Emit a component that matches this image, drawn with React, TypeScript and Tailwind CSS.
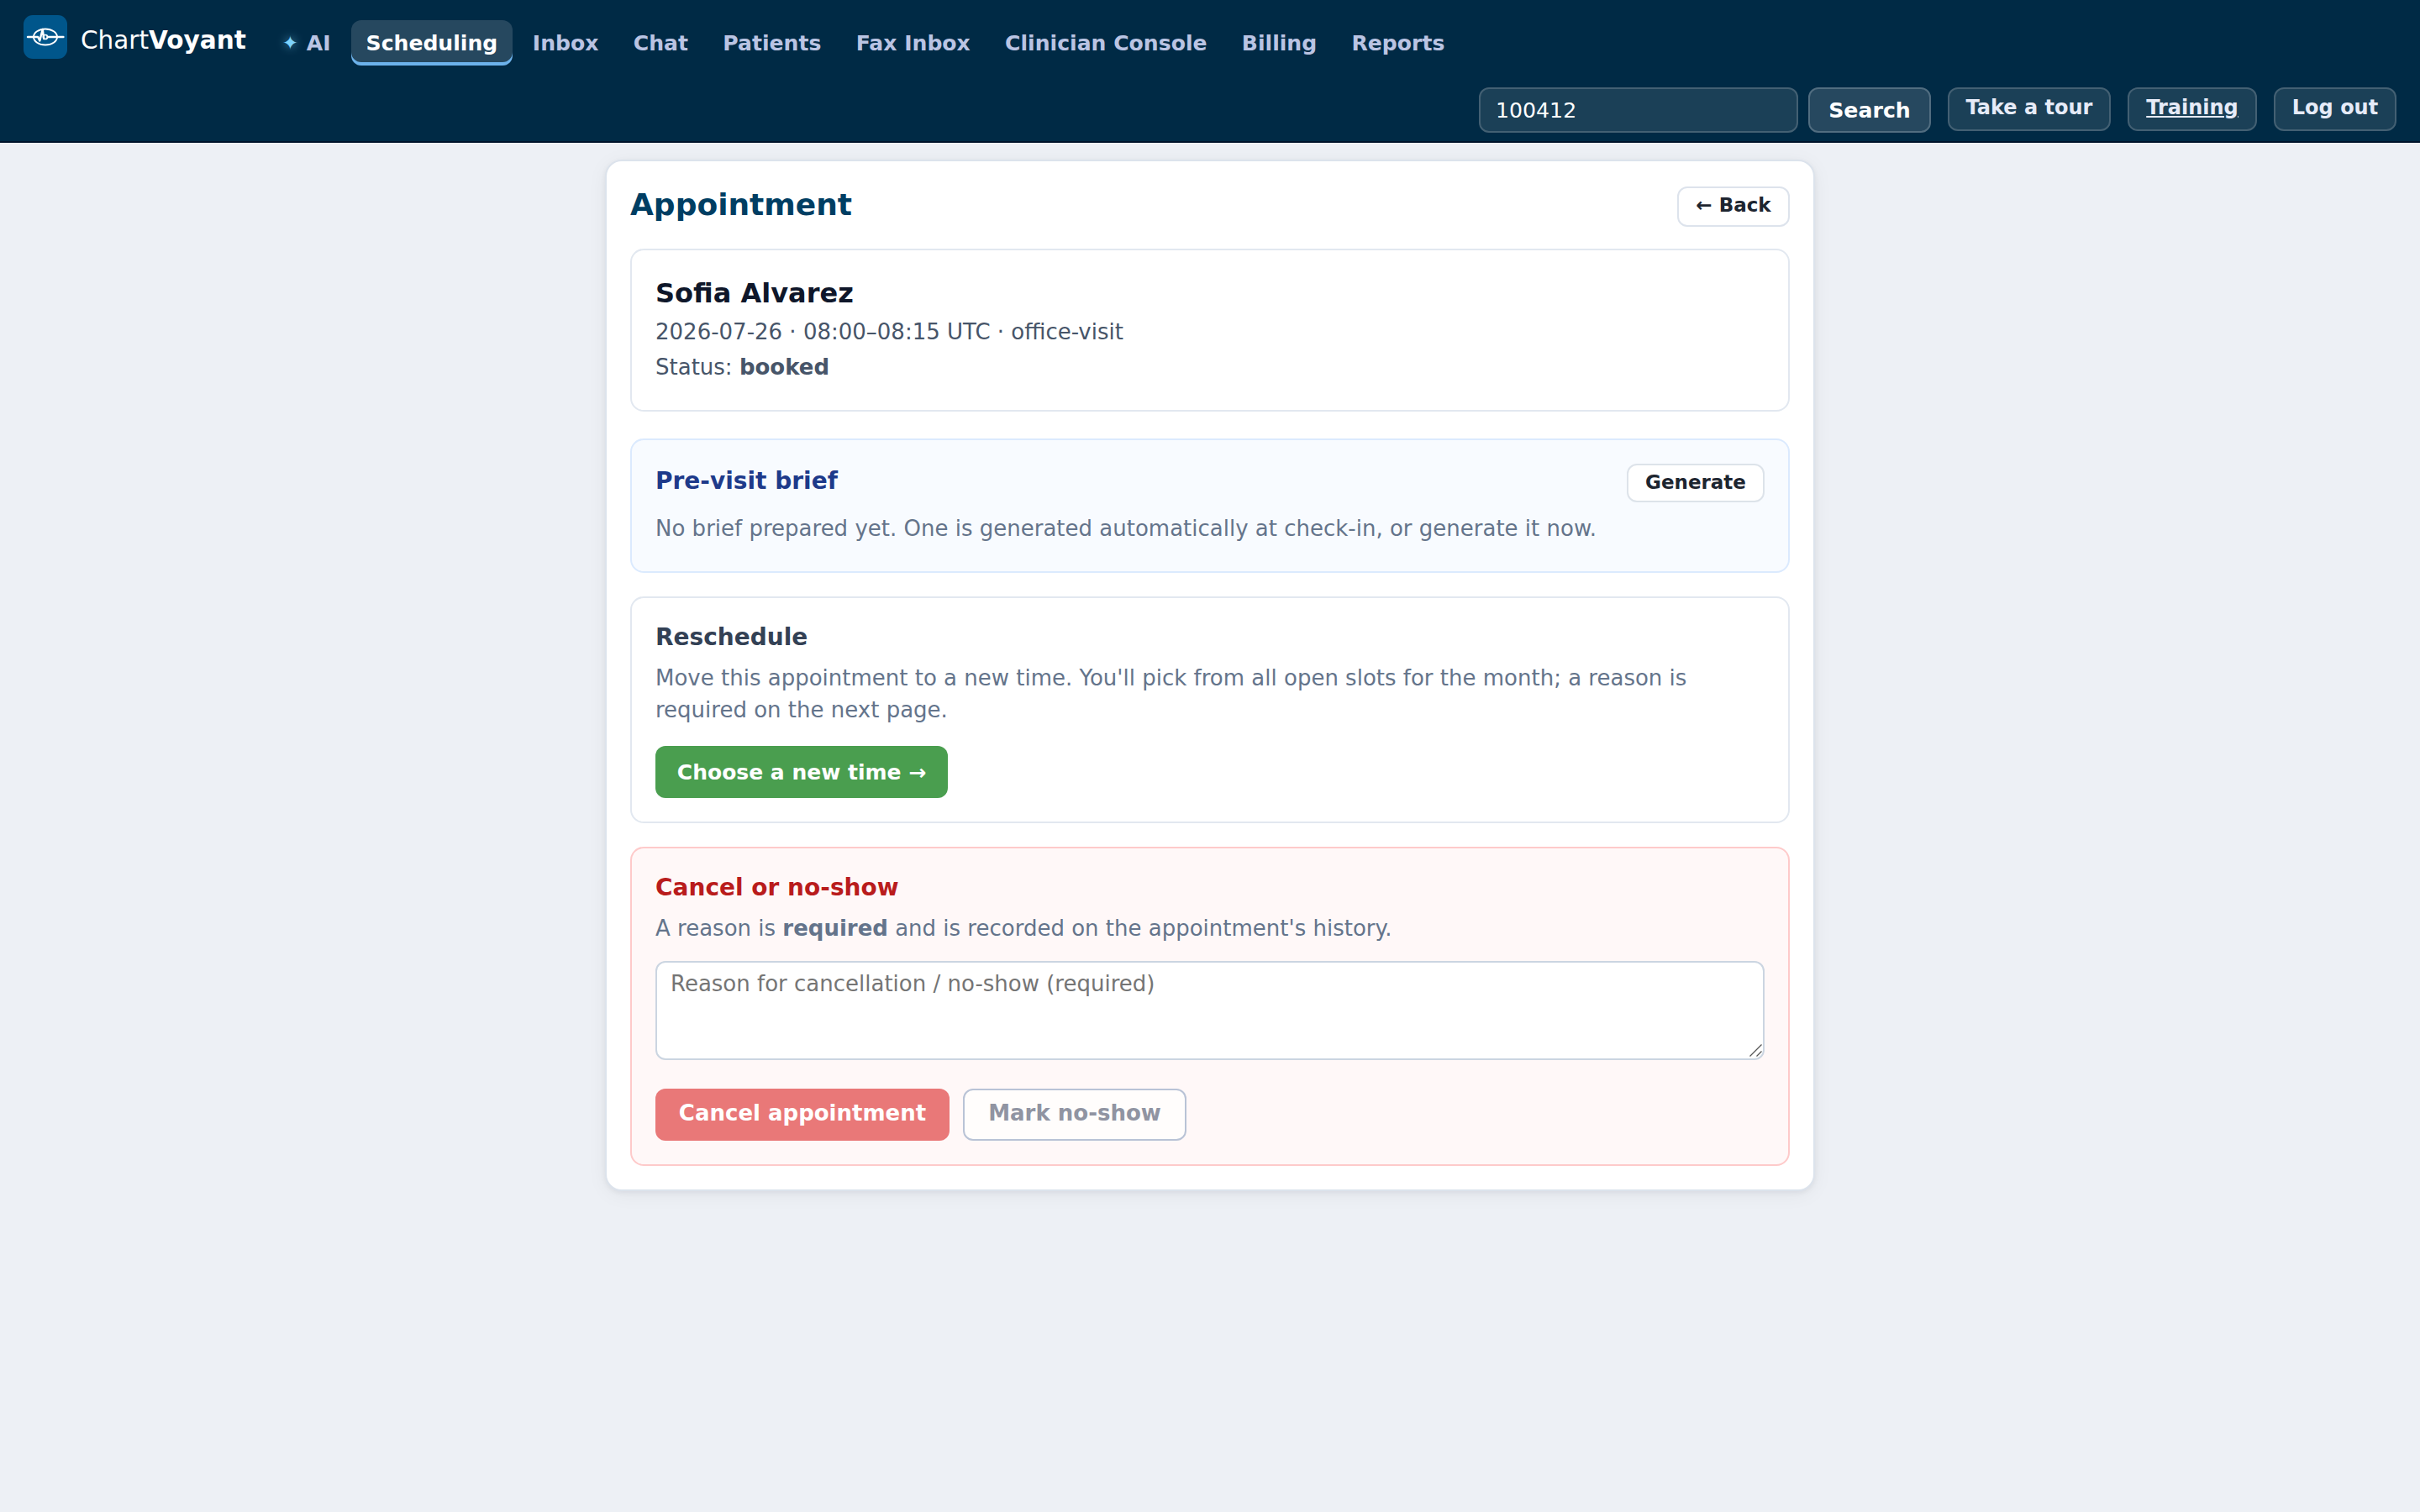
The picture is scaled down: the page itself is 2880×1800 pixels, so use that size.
import React from "react";

const navItems = [
  "Scheduling",
  "Inbox",
  "Chat",
  "Patients",
  "Fax Inbox",
  "Clinician Console",
  "Billing",
  "Reports",
];

function Logo() {
  return (
    <svg viewBox="0 0 52 52" className="size-[52px] shrink-0" fill="none">
      <rect width="52" height="52" rx="11" fill="#00568b" />
      <g stroke="#fff" strokeLinecap="round" strokeLinejoin="round">
        <ellipse cx="26" cy="26" rx="14" ry="9.5" strokeWidth="1.9" />
        <path d="M5 26H17.2L19.3 30.4L22.7 17L24.2 28" strokeWidth="2.4" />
        <path d="M28.6 26H47.4" strokeWidth="2.4" />
        <circle cx="26" cy="26" r="2.5" strokeWidth="1.7" />
      </g>
    </svg>
  );
}

function Header() {
  return (
    <header className="h-[170px] border-b-2 border-[#00132a] bg-[#002a45] px-7 pt-[18px]">
      <div className="flex h-[60px] items-start">
        <div className="flex w-[290px] shrink-0 gap-4">
          <Logo />
          <span className="text-[29.5px] leading-[60px] text-white">
            Chart<b>Voyant</b>
          </span>
        </div>
        <nav className="mt-1.5 flex gap-[6.6px] text-[25.1px] font-bold leading-[55px] text-[#bac4e3]">
          <a className="flex h-[54px] w-[93.4px] items-center pl-[17.4px]">
            <span className="mr-[9.4px] w-5 text-center text-[23px] font-normal text-[#7dd3fc] [text-shadow:0_0_12px_rgba(125,211,252,0.7)]">
              ✦
            </span>
            AI
          </a>
          {navItems.map((item) => (
            <a
              key={item}
              className={
                item === "Scheduling"
                  ? "h-[54px] rounded-xl bg-[#26485f] px-[17.6px] text-white shadow-[inset_0_-4px_0_#6cb2eb]"
                  : "h-[54px] px-[17.36px]"
              }
            >
              {item}
            </a>
          ))}
        </nav>
      </div>
      <div className="mt-[26px] flex items-start justify-end font-bold">
        <input
          defaultValue="100412"
          className="mr-3 h-[54px] w-[380px] rounded-xl border-2 border-[#436073] bg-[#1b4057] px-[18px] text-[25.2px] font-normal text-white"
        />
        <button className="mr-5 h-[54px] w-[146px] rounded-xl border-2 border-[#516d80] bg-[#26485f] text-[25.2px] leading-[51px] text-white">
          Search
        </button>
        <div className="flex gap-5 text-[24px] text-[#e6ebf8]">
          <button className="h-[52px] w-[194px] rounded-xl border-2 border-[#436073] bg-[#1b4057] pb-1 leading-[44px]">
            Take a tour
          </button>
          <button className="h-[52px] w-[154px] rounded-xl border-2 border-[#436073] bg-[#1b4057] pb-1 leading-[44px] underline">
            Training
          </button>
          <button className="h-[52px] w-[146px] rounded-xl border-2 border-[#436073] bg-[#1b4057] pb-1 leading-[44px]">
            Log out
          </button>
        </div>
      </div>
    </header>
  );
}

export default function App() {
  return (
    <div className="h-[1800px] w-[2880px] overflow-hidden bg-[#edf0f5] font-['DejaVu_Sans',sans-serif]">
      <Header />
      <main className="mx-auto mt-5 w-[1440px] rounded-[20px] border-2 border-[#dce3ec] bg-white p-7 text-[26px] leading-[38px] text-[#64748b] shadow-[0_2px_6px_rgba(15,23,42,0.06),0_4px_24px_rgba(15,23,42,0.05)]">
        <div className="flex h-[76px] items-start justify-between">
          <h1 className="text-[36px] font-bold leading-[47px] text-[#003e63]">Appointment</h1>
          <button className="mt-0.5 h-12 w-[134px] rounded-xl border-2 border-[#dde3ec] bg-white pb-1 text-[23px] font-bold leading-[40px] text-[#1d2530]">
            ← Back
          </button>
        </div>

        <section className="h-[194px] rounded-2xl border-2 border-[#e2e8f0] px-7 pt-7 leading-[42px] text-[#475569]">
          <h2 className="mb-0.5 text-[32px] font-bold leading-[46px] text-[#0f172a]">Sofia Alvarez</h2>
          <p>2026-07-26 · 08:00–08:15 UTC · office-visit</p>
          <p>
            Status: <b>booked</b>
          </p>
        </section>

        <section className="mt-8 h-[160px] rounded-2xl border-2 border-[#dbeafe] bg-[#f8fbff] p-7">
          <div className="flex items-start justify-between">
            <h3 className="text-[28px] font-bold leading-[41px] text-[#1e3a8a]">Pre-visit brief</h3>
            <button className="h-[46px] w-[164px] rounded-xl border-2 border-[#dde3ea] bg-white pb-0.5 text-[23px] font-bold leading-[40px] text-[#1d2530]">
              Generate
            </button>
          </div>
          <p className="mt-3">
            No brief prepared yet. One is generated automatically at check-in, or generate it now.
          </p>
        </section>

        <section className="mt-7 rounded-2xl border-2 border-[#e2e8f0] p-7">
          <h3 className="text-[28px] font-bold leading-[37px] text-[#334155]">Reschedule</h3>
          <p className="mt-[11px]">
            Move this appointment to a new time. You'll pick from all open slots for the month; a reason is
            required on the next page.
          </p>
          <button className="mt-6 block h-[62px] w-[348px] rounded-xl bg-[#4a9e4f] pt-px text-[25px] font-bold text-white">
            Choose a new time →
          </button>
        </section>

        <section className="mt-7 rounded-2xl border-2 border-[#fecaca] bg-[#fff8f8] p-7">
          <h3 className="text-[28px] font-bold leading-[37px] text-[#b91c1c]">Cancel or no-show</h3>
          <p className="mt-[11px]">
            A reason is <b>required</b> and is recorded on the appointment's history.
          </p>
          <div className="relative mt-5">
            <textarea
              placeholder="Reason for cancellation / no-show (required)"
              className="block h-[118px] w-full resize-none rounded-xl border-2 border-[#cbd5e1] bg-white px-4 pt-2.5 leading-[30px] placeholder:text-[#757575]"
            />
            <svg
              viewBox="0 0 16 16"
              className="absolute bottom-1 right-[3px] size-4"
              stroke="#555"
              strokeWidth="1.3"
              fill="none"
            >
              <path d="M1.5 15.5L15.5 1.5M9.5 15.5L15.5 9.5" />
            </svg>
          </div>
          <div className="mt-[34px] flex gap-4 font-bold">
            <button className="h-[62px] w-[350px] rounded-xl bg-[#e97878] pb-1 text-[#fffefe]">
              Cancel appointment
            </button>
            <button className="h-[62px] w-[266px] rounded-xl border-2 border-[#b9c3d6] bg-[#fffdfc] pb-1 text-[#9094a2]">
              Mark no-show
            </button>
          </div>
        </section>
      </main>
    </div>
  );
}
